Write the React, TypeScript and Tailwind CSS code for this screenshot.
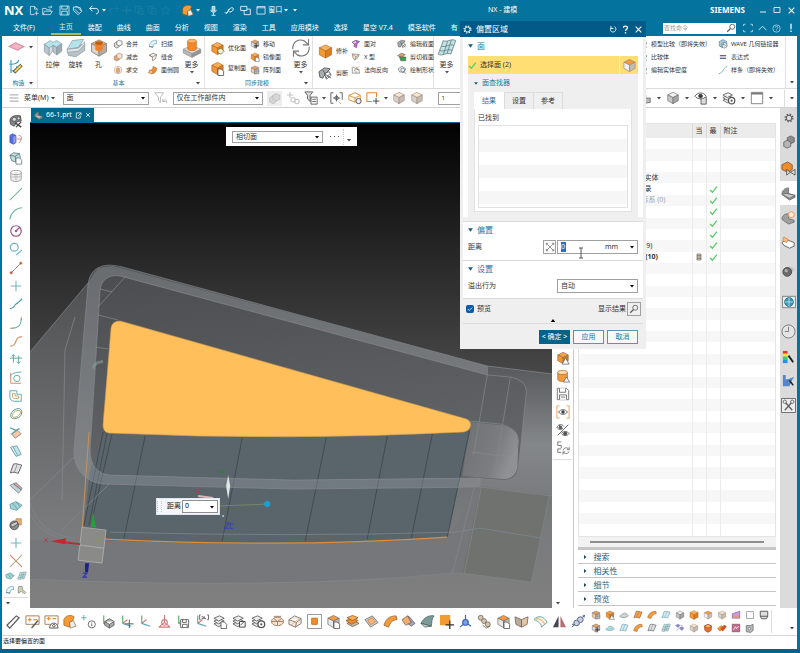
import { Fragment } from "react";
import type { ReactNode } from "react";
import clsx from "clsx";

const cube = (top: string, left: string, right: string, stroke = "#666") => (
    <g stroke={stroke} strokeWidth="0.7" strokeLinejoin="round">
        <path fill={top} d="M8 1.5 14 4.5 8 7.5 2 4.5Z" />
        <path fill={left} d="M2 4.5 8 7.5V14.5L2 11Z" />
        <path fill={right} d="M14 4.5 8 7.5V14.5L14 11Z" />
    </g>
);

const sheet = (fill: string, stroke = "#666") => (
    <g stroke={stroke} strokeLinejoin="round">
        <path fill={fill} d="M5 2.5C8 1 11 3 14.5 3.5L10.5 13C8 12 5 11 1.5 12.5Z" />
        <path fill="none" strokeWidth="0.6" d="M9.5 2.8 6 11.8" />
    </g>
);

const layers = (
    <g fill="#eee" stroke="#555" strokeWidth="0.9" strokeLinejoin="round">
        <path d="M1 10.5 6 13.5 12 10.5 7 8Z" />
        <path d="M1 7.5 6 10.5 12 7.5 7 5Z" />
        <path d="M1 4.5 6 7.5 12 4.5 7 2Z" />
    </g>
);

const csys = (
    <g fill="none" strokeWidth="1.2">
        <path stroke="#54ad66" d="M4 10V1.5" />
        <path stroke="#d66767" d="M4 10 9 6" />
        <path stroke="#58a7b6" d="M4 10 13 13" />
    </g>
);

const gear = (color: string) => (
    <g fill="none" stroke={color}>
        <circle cx="8" cy="8" r="4.5" strokeWidth="1.6" />
        <circle cx="8" cy="8" r="6.2" strokeWidth="2" strokeDasharray="2.4 2.5" />
    </g>
);

const badge = (fill: string) => (
    <path fill={fill} stroke="#555" strokeWidth="0.9" d="M8.5 8.5H12L14.5 11V15.5H8.5Z" />
);

const magnifier = (color: string) => (
    <g fill="none" stroke={color} strokeWidth="1.3">
        <circle cx="10" cy="6" r="4" />
        <path strokeWidth="2" d="M7 9 2 14" />
    </g>
);

const ICONS: Record<string, ReactNode> = {
    orangeCube: (
        <g stroke="#a86a2c" strokeWidth="0.7" strokeLinejoin="round">
            <path fill="#ffb45c" d="M8 1 14.5 4 8 7.500 1.500 4Z" />
            <path fill="#f29a36" d="M1.500 4 8 7.500V15L1.500 11.500Z" />
            <path fill="#dd7c1c" d="M14.500 4 8 7.500V15L14.500 11.500Z" />
        </g>
    ),
    greyCube: cube("#f1f1f1", "#c7c7c7", "#a5a5a5"),
    paleCube: cube("#f8e4d3", "#d8d2cc", "#c5bdb4", "#a08b78"),
    orangeTop: cube("#f79a3a", "#f0f0f0", "#c4bdb6", "#9a8470"),
    orangeTopPage: <>{cube("#f79a3a", "#e8e8e8", "#bdbdbd")}{badge("#fff")}</>,
    orangePage: <>{cube("#ffad52", "#f29736", "#de7a1a", "#a8682a")}{badge("#fff")}</>,
    orangeWarn: (
        <>
            {cube("#f6a24b", "#f2963a", "#c47b36", "#9a6632")}
            <path fill="#fff" stroke="#666" strokeWidth="0.9" d="M11 8 15 15H7Z" />
        </>
    ),
    optimize: (
        <>
            {cube("#ffad52", "#f29736", "#de7a1a", "#a8682a")}
            <path fill="#eef0d8" stroke="#75804a" strokeWidth="0.9" d="M8 9 12 8 15 11 12 14 9 13Z" />
        </>
    ),
    orangeCylinder: (
        <g stroke="#a0682e" strokeWidth="0.8">
            <path fill="#f3983b" d="M2 4V12C3 15 12 15 13 12V4Z" />
            <ellipse cx="7.5" cy="4" rx="5.5" ry="2.4" fill="#ffd9a5" />
            <path fill="#fff" stroke="#555" d="M12 9 15.5 15H8.5Z" />
        </g>
    ),
    greyCylinder: (
        <g stroke="#888" strokeWidth="0.8" fill="#ececec">
            <path d="M2 4V12C3 15 13 15 14 12V4Z" />
            <ellipse cx="8" cy="4" rx="6" ry="2.4" fill="#fafafa" />
            <path d="M8 4V13M3 9H13" stroke="#aaa" />
        </g>
    ),
    plane: <path fill="#f4b4c4" stroke="#d8899e" d="M1 8 7 4.5 15 8 9 11.5Z" />,
    sketch: (
        <g fill="none">
            <path stroke="#44a3c4" strokeWidth="1.2" d="M3 1V14M1 5C6 6 10 4 11 1M3 12C7 12 9 9 9 7" />
            <path stroke="#555" strokeWidth="3.4" d="M6 13.5 13.5 6" />
            <path stroke="#f0ce4f" strokeWidth="2" d="M6.7 12.8 13 6.5" />
        </g>
    ),
    extrude: (
        <g stroke="#7d959e" strokeWidth="0.5" strokeLinejoin="round">
            <path fill="#b4e3ec" d="M1 5 6 2 8 3.5 11 2 15 4.5 11 7.5 8 6 5 8Z" />
            <path fill="#bcc5c9" d="M1 5V11L5 14V8Z" />
            <path fill="#d9dfe2" d="M5 8 8 6V10L5 14Z" />
            <path fill="#bcc5c9" d="M8 6 11 7.5V13.5L8 11Z" />
            <path fill="#a0aaaf" d="M11 7.5 15 4.5V10.5L11 13.5Z" />
        </g>
    ),
    revolve: (
        <g stroke="#7d959e" strokeWidth="0.5" strokeLinejoin="round">
            <path fill="#b9c2c6" d="M1 10 5 6 15 5 15 10 8 15 2 14Z" />
            <path fill="#b4e3ec" d="M1 9 5 2 14 1 10 7.5Z" />
            <path fill="#e1e5e7" d="M1 9 10 8 15 3V5L10 10.5 1 11.5Z" />
        </g>
    ),
    hole: (
        <>
            {cube("#f9a55a", "#d9d3ce", "#b3aca6", "#8c8680")}
            <path fill="#f08226" d="M5 3.5V9C6 11 10 11 11 9V3.5Z" />
            <ellipse cx="8" cy="4" rx="3" ry="1.4" fill="#bd5d12" />
        </>
    ),
    boss: (
        <g stroke="#888" strokeWidth="0.5">
            <path fill="#e4e4e4" d="M1 9 8 6 15 9 8 12.5Z" />
            <path fill="#b9b9b9" d="M1 9 8 12.5V15.5L1 12Z" />
            <path fill="#969696" d="M15 9 8 12.5V15.5L15 12Z" />
            <path fill="#f28a2c" stroke="#c96711" d="M4.5 2.5V9C5.500 10.6 10.500 10.6 11.500 9V2.5Z" />
            <ellipse cx="8" cy="2.5" rx="3.5" ry="1.5" fill="#ffb56d" stroke="#c96711" />
        </g>
    ),
    unite: (
        <g fill="#ddd" stroke="#555">
            <path d="M2 7 6 5 10 7V12L6 14.5 2 12Z" />
            <path fill="#f5f5f5" d="M6 4 10 2 14.5 4V9L10 11 6 9Z" />
        </g>
    ),
    subtract: (
        <g stroke="#a87551">
            <path fill="#d9a982" d="M2 7 6 5 10 7V12L6 14.5 2 12Z" />
            <path fill="#fbe4cf" d="M6 4 10 2 14.5 4V9L10 11 6 9Z" />
        </g>
    ),
    intersect: (
        <g fill="none" stroke="#b39c8a">
            <circle cx="8" cy="8" r="6" />
            <path fill="#f1a35d" d="M5 6 8 4 11 6V11L8 13 5 11Z" />
        </g>
    ),
    sweep: (
        <g fill="none" stroke="#4e94aa">
            <path fill="#e8f4f7" d="M2 12C2 7 6 2 13 2L14 7C9 7 8 10 8 13Z" />
            <path stroke="#555" d="M2 12 8 13" />
        </g>
    ),
    sew: (
        <g fill="#f4eee9" stroke="#75665b">
            <path d="M2 5 8 2 14 4 12 11 7 14 7 8Z" />
            <path d="M7 8 14 4M2 5 7 8" />
        </g>
    ),
    blend: (
        <g stroke="#9b5f2a" strokeWidth="0.7">
            <path fill="#f08d32" d="M3 8C8 8 8 4 8 2L14 5C14 11 10 14 6 14L1 12Z" />
            <path fill="#ffc78f" d="M1 12 3 8 8 10 6 14Z" />
        </g>
    ),
    faceMove: (
        <>
            {cube("#f5a151", "#dedede", "#b0b0b0")}
            <path stroke="#333" strokeWidth="1.3" fill="none" d="M10 7V15M6 11H14" />
        </>
    ),
    faceGrid: (
        <>
            {cube("#f5a151", "#f2c9a2", "#c9c9c9")}
            <path stroke="#555" strokeWidth="0.9" fill="#fff" d="M8 8H14V14H8ZM11 8V14M8 11H14" />
        </>
    ),
    rotate: (
        <g fill="none" stroke="#777" strokeWidth="0.9">
            <path d="M1.500 9C1 3 6 0 11 2.500L13.500 5M14.500 7C15 13 10 16 5 13.500L2.500 11" />
            <path d="M14 1V5.500H9.500M2 15V10.500H6.500" />
        </g>
    ),
    section: (
        <g stroke="#444" strokeWidth="0.8">
            <path fill="#a8adb0" d="M1 6 7 2 13 3 9 7 5 13 2 12Z" />
            <path fill="#fff" d="M7 8 12 6 14 10 9 14Z" />
            <path fill="none" d="M8 9 14 13M13 8 8 13M5 4 8 9" />
        </g>
    ),
    faceMagenta: (
        <g stroke="#6e3b80" strokeWidth="0.8">
            <path fill="#b968c7" d="M2 5 8 2 14 4 10 7 9 14 5 12V8Z" />
            <path fill="#e6b9ec" d="M2 5 8 2 10 7 5 8Z" />
        </g>
    ),
    funnelShape: (
        <g fill="#f3e3d6" stroke="#85756a">
            <path d="M2 3 13 4 11 9 6 13 3 9Z" />
            <path fill="none" d="M2 3 8 8 13 4M8 8 6 13" />
        </g>
    ),
    normals: (
        <g fill="none" stroke="#6d6560">
            <path d="M2 3V13H14M5 10C5 6 10 5 13 7V13M3 3 12 8M8 13V9" />
            <path stroke="#d18a51" d="M7 2 10 5 13 2" />
        </g>
    ),
    greenCut: (
        <g stroke="#464646" strokeWidth="0.8">
            <path fill="#e0a05f" d="M1 6 7 2 13 4 8 9Z" />
            <path fill="#37a349" d="M4 8 14 8V14H6Z" />
        </g>
    ),
    drawShape: (
        <g fill="#e8eef2" stroke="#5c6c75">
            <path d="M2 6 8 2 14 6 11 12 4 11Z" />
            <circle cx="9" cy="8" r="3" />
            <path d="M11 10 14 14" />
        </g>
    ),
    meshBlue: (
        <g stroke="#5f7884" strokeWidth="0.6">
            <path fill="#bfe4e2" d="M5 2C8 4 11 0 15 2L11 13C8 11 4 15 1 13Z" />
            <path fill="none" d="M8.5 2.5 5 13.5M11.5 1.5 8 12.5M3.5 6.5C7 8 10 4 13.5 6M2.2 10C6 11.5 8 8 12.2 10" />
        </g>
    ),
    globeLink: (
        <g stroke="#395a6c" strokeWidth="0.8">
            <path fill="#a8cede" d="M2 4 8 1 14 4V11L8 14 2 11Z" />
            <circle cx="10" cy="10" r="4.5" fill="#e8eff2" />
            <path fill="none" d="M6 8C9 9 12 9 14 12M9 6 7 13" />
        </g>
    ),
    equals: <path stroke="#30336b" strokeWidth="1.8" d="M3 6H13M3 10H13" />,
    spline: <path fill="none" stroke="#4aa6a2" strokeWidth="1.2" d="M1 14C5 14 7 10 9 7S13 3 15 2" />,
    funnel: (
        <g fill="none" stroke="#b4b4b4">
            <path d="M1 2H11L7.5 7V13L5 11V7Z" />
            <path d="M10 12C13 8 15 11 14 14M10 12H13M10 12V9" />
        </g>
    ),
    filterList: (
        <g fill="#ddd" stroke="#555">
            <path d="M1 1H10L7 5V12L4 9V5Z" />
            <path fill="#fff" d="M8 7H15V15H8ZM9.5 9.5H13.5M9.5 12H13.5" />
        </g>
    ),
    bracketMove: (
        <g fill="none" stroke="#555">
            <path d="M4 2H1V14H4M11 2H14V10" />
            <path d="M7.5 4V12M3.5 8H11.5" />
            <circle cx="7.5" cy="8" r="2" />
            <path stroke="#dd8a3d" d="M10 12 13 15" />
        </g>
    ),
    rectSelect: (
        <g fill="none">
            <path stroke="#e08b3b" strokeWidth="1.2" d="M1 2H12V7M1 2V12H7" />
            <path stroke="#444" strokeWidth="1.1" d="M11.5 8V15M8 11.5H15" />
        </g>
    ),
    boxGlobe: (
        <g fill="none" stroke="#e08b3b" strokeWidth="1.1">
            <path d="M1 5 8 2 14 5 8 8ZM1 5V10L8 13V8M14 5V9" />
            <circle cx="12" cy="11.5" r="3" stroke="#555" fill="#eee" />
        </g>
    ),
    ghost: (
        <g fill="#d6d6d6" stroke="#bbb">
            <path d="M2 7 6 5 10 7V12L6 14.5 2 12Z" />
            <path d="M6 4 10 2 14.5 4V9L10 11 6 9Z" />
        </g>
    ),
    chain: (
        <g fill="none" stroke="#c4c4c4" strokeWidth="1.2">
            <path d="M1 4.500H8M4.500 1V8" />
            <circle cx="8" cy="10" r="2.5" />
            <circle cx="12.5" cy="12" r="2.5" />
        </g>
    ),
    eyePage: (
        <g fill="#fff" stroke="#555">
            <path fill="#ddd" d="M8 7H14V15H8Z" />
            <path d="M1 6C4 1 11 1 14 6C11 10 4 10 1 6Z" />
            <circle cx="7.5" cy="5.8" r="2.2" fill="#333" />
        </g>
    ),
    frame: (
        <g fill="#fff" stroke="#777">
            <path d="M1.5 1.5H14.5V14.5H1.5Z" />
            <path strokeWidth="2" d="M1.5 3H14.5" />
        </g>
    ),
    shaded: (
        <g stroke="#444" strokeWidth="0.7">
            <path fill="#6e6e6e" d="M2 6C4 3 8 2 9 5L8 13 2 11Z" />
            <path fill="#bdbdbd" d="M8 8 14 8V13L8 14Z" />
        </g>
    ),
    layers,
    layerPage: <>{layers}{badge("#fff")}</>,
    layerEdit: <>{layers}<path fill="#fff" stroke="#444" d="M8 8H14V14H8ZM9 12 13 8" /></>,
    layerGear: (
        <>
            {layers}
            <circle cx="11" cy="11" r="3.6" fill="#fff" stroke="#555" strokeWidth="1.4" />
            <circle cx="11" cy="11" r="1.2" fill="#555" />
        </>
    ),
    // curve tools
    people: (
        <g stroke="#444" strokeWidth="0.8">
            <path fill="#7d8387" d="M1 8C1 3 6 1 13 2L14 8 9 9 6 14 2 12Z" />
            <circle cx="6" cy="6" r="2.4" fill="#ddd" />
            <circle cx="11" cy="5" r="1.6" fill="#eee" />
            <path strokeWidth="1.6" d="M7 10 14 15M14 9 8 15" />
        </g>
    ),
    blueBlock: (
        <g>
            <path fill="#5a6de0" stroke="#3a46a8" strokeWidth="0.7" d="M1 4 4 2 8 4V12L5 14 1 12Z" />
            <path fill="#98a4f2" d="M5 5.500 7.500 4.500V11.500L5 13Z" />
            <path fill="none" stroke="#d87a7a" d="M9 8H14M11 4C14 4 15 6 14 8S14 12 11 12" />
        </g>
    ),
    teapot: (
        <g stroke="#56666d" strokeWidth="0.8" fill="#bfe0e3">
            <path d="M1 5 5 2 12 3 13 8 9 13 3 11Z" />
            <path fill="none" d="M1 5 7 6 12 3M7 6 8 13" />
            <path fill="#fff" d="M8 8H12L14.5 10.5V15H8Z" />
        </g>
    ),
    line: <path stroke="#74b892" strokeWidth="1.2" d="M1 15 15 1" />,
    arc: <path fill="none" stroke="#6ab5a4" strokeWidth="1.3" d="M1 15C2 8 8 2 15 2" />,
    circle: (
        <g fill="none" stroke="#9a5a8a" strokeWidth="1.4">
            <circle cx="8" cy="8" r="6" />
            <path d="M8 8 12 4" />
            <circle cx="8" cy="8" r="0.8" />
        </g>
    ),
    tangent: (
        <g fill="none" stroke="#6ab2bb" strokeWidth="1.3">
            <circle cx="6" cy="6" r="4.500" />
            <path d="M8 15 15 9" />
        </g>
    ),
    segment: (
        <g stroke="#c0653c" fill="#c0562a">
            <path stroke="#5aa9b4" d="M2 14 14 2" />
            <path strokeDasharray="5 3" d="M2 14 14 2" />
            <circle cx="2.5" cy="13.5" r="1.2" />
            <circle cx="13.5" cy="2.5" r="1.2" />
        </g>
    ),
    plus: <path stroke="#74b4bd" strokeWidth="1.2" d="M8 2V14M2 8H14" />,
    curveS: <path fill="none" stroke="#4b9dab" strokeWidth="1.3" d="M1 13C6 14 6 9 8 8S12 5 15 2" />,
    fillet: (
        <g fill="none" strokeWidth="1.2">
            <path stroke="#dc9b69" d="M1 14H5M14 1V5" />
            <path stroke="#5aac99" d="M3 14C10 14 14 11 14 3" />
        </g>
    ),
    bridge: <path fill="none" stroke="#d49a72" strokeWidth="1.3" d="M1 14C6 14 7 11 8 8S11 3 15 3" />,
    arrows: (
        <g fill="none" stroke="#5da79c" strokeWidth="1.1">
            <path d="M1 7H15M5 3V12M11 4V13M3 5 5 3 7 5M9 11 11 13 13 11" />
        </g>
    ),
    offsetCurve: (
        <g fill="none" strokeWidth="1.1">
            <path stroke="#d9846a" d="M2 2V14H14" />
            <path stroke="#5cabae" d="M1 6C5 1 9 2 14 1" />
            <circle cx="9" cy="8.5" r="3.6" stroke="#5cabae" />
        </g>
    ),
    profile: (
        <g fill="none" strokeWidth="1.1">
            <path stroke="#5cabae" d="M1 2H9V6H14V14H6C3 14 1 12 1 9Z" />
            <path stroke="#c9a36f" d="M4 5H7V8H11V11H7C5 11 4 10 4 8Z" />
        </g>
    ),
    ring: (
        <g fill="none" strokeWidth="1.1">
            <path stroke="#4c8f93" d="M2 10C2 5 8 1 12 2S15 10 11 12 2 14 2 10Z" />
            <path stroke="#b3a55d" d="M4 10C4 6 8 3.500 11.500 4S12.500 9 10 10.500 4 12.500 4 10Z" />
        </g>
    ),
    sheetLift: (
        <g stroke="#85766b" strokeWidth="0.8">
            <path fill="#f4c7a8" d="M3 9 10 5 14 9 7 14Z" />
            <path fill="none" stroke="#4c9fae" strokeWidth="1.3" d="M1 2 8 5 12 3M8 5 3 9" />
        </g>
    ),
    sheetBlue: sheet("#cfeaf0", "#6a9fae"),
    sheetTilt: (
        <g stroke="#6a9fae" strokeLinejoin="round">
            <path fill="#bfe4ec" d="M2 4 9 2 14 12 8 14Z" />
            <path fill="#e2f3f7" d="M2 4 4 2.500 10 13 8 14Z" />
        </g>
    ),
    sheetGrey: sheet("#dfe3e5", "#555"),
    sheetOrange: sheet("#f7a04a", "#8f6035"),
    sheetPink: (
        <g stroke="#666" strokeWidth="0.7">
            <path fill="#bcd3d6" d="M1 5 5 3 14 10 11 14Z" />
            <path fill="#d9a0b0" d="M5 3 8 2 15 8 14 10Z" />
        </g>
    ),
    sheetTeal: (
        <g stroke="#4a858a" strokeWidth="0.7">
            <path fill="#a3d3d8" d="M1 6 8 3 15 7 9 13 2 11Z" />
            <path fill="none" d="M4 4.5 10 12M8 3 13 9" />
        </g>
    ),
    knob: (
        <g stroke="#444" strokeWidth="0.8">
            <path fill="#e5b07f" stroke="#b9783f" d="M8 2H14V9H8Z" />
            <circle cx="6" cy="9.5" r="5" fill="#8a8f92" />
            <path fill="#ccc" d="M2 8 9 5 10 8 3 12Z" />
        </g>
    ),
    cross: (
        <g strokeWidth="1.2">
            <path stroke="#cf8667" d="M1 1 15 15" />
            <path stroke="#b0aa88" d="M15 1 1 15" />
        </g>
    ),
    wrench: (
        <g fill="#d9d2a6" stroke="#5f7679">
            <path d="M2 3 8 2 9 7 14 12 12 14 7 10 2 13Z" />
        </g>
    ),
    // file, measure and datum tools
    ruler: <path fill="#fff" stroke="#555" strokeWidth="1.2" d="M1 12 11 2 14 4 4 15Z" />,
    boardEdit: (
        <g fill="#fff" stroke="#a17c5c">
            <path d="M1 2H15V11H1Z" />
            <path stroke="#ef8d2e" strokeWidth="1.3" fill="none" d="M3 6H7M5 4V8M9 6H13" />
            <path stroke="#555" strokeWidth="1.5" d="M7 15 14 7" />
        </g>
    ),
    boardGear: (
        <g fill="#fff" stroke="#a17c5c">
            <path d="M1 2H15V11H1Z" />
            <path stroke="#ef8d2e" strokeWidth="1.3" fill="none" d="M3 5H7M5 3V7M9 5H13" />
            <path stroke="#555" d="M6 15C6 8 15 8 15 15Z" />
            <circle cx="10.5" cy="12.5" r="1.4" stroke="#555" />
        </g>
    ),
    orangeHead: (
        <g stroke="#8b6030" strokeWidth="0.7">
            <path fill="#f59b34" d="M2 6C3 2 9 0 13 3L11 8 8 9V14L2 12Z" />
            <path fill="#ececec" d="M8 9 12 7 15 13 9 15Z" />
        </g>
    ),
    info: (
        <g fill="none" stroke="#666">
            <path stroke="#5ab0b6" d="M3 1V7M0 4H6" />
            <circle cx="11.5" cy="11" r="3.8" />
            <path d="M11.5 10V13M11.5 8.5V9.2" />
        </g>
    ),
    csys,
    csysCube: (
        <>
            {csys}
            <path fill="#aaa" stroke="#555" strokeWidth="0.8" d="M5 8 10 5 15 8V12L10 15 5 12ZM5 8 10 11 15 8M10 11V15" />
        </>
    ),
    csysMove: <>{csys}<path stroke="#555" d="M11 6V15M6.5 10.5H15.5" /></>,
    csysRed: (
        <g fill="none" stroke="#d67878" strokeWidth="1.1">
            <path d="M8 1V9L2 14M8 9 14 14M2 14H14" />
            <circle cx="8" cy="9" r="3" />
        </g>
    ),
    csysSave: <>{csys}<path fill="#fff" stroke="#666" d="M6 6H14.5V14.5H6ZM8 6V9H12V6M8 14V11H13V14" /></>,
    csysPost: (
        <>
            {csys}
            <path fill="none" stroke="#666" d="M7 1H6V6H7M8 3H10V5H8M11 2.5V5H13M14 1H15.5V6H14" />
        </>
    ),
    drum: (
        <g fill="#f6e1cc" stroke="#9b7f66">
            <ellipse cx="8" cy="8" rx="6.5" ry="4.5" />
            <path d="M4 5 8 8 12 5M8 8V12M2 8H14M4 2.5H12" />
        </g>
    ),
    boxCut: (
        <g fill="#f1ece8" stroke="#83786e">
            <path d="M1 6 7 2 14 5 9 9ZM1 6V11L8 14 14 10V5M9 9 8 14" />
            <path stroke="#f1ab65" d="M3 12 13 4" />
        </g>
    ),
    orangeSquare: (
        <g>
            <path fill="#fff" stroke="#777" strokeWidth="0.8" d="M0.5 0.5H15.5V15.5H0.5Z" />
            <path fill="#f0902c" stroke="#c76f18" d="M5 4.5H11V11H5Z" />
        </g>
    ),
    orangeStack: (
        <g stroke="#8b5a26" strokeWidth="0.8">
            <path fill="#bbb" d="M2 10 8 13.5 15 10 9 7Z" />
            <path fill="#ef8c2c" d="M1 7 7 11 14 7 8 4Z" />
            <path fill="#ffab54" d="M2 4 8 7 14 4 8 1.5Z" />
        </g>
    ),
    tray: (
        <g stroke="#666" strokeWidth="0.8">
            <path fill="#c8cfd8" d="M1 6 9 2 15 9 7 14Z" />
            <path fill="#f8b67a" stroke="#d5803c" d="M4 6.5 9 4 12 8.5 7 11.5Z" />
        </g>
    ),
    orangeArc: <path fill="#f59a36" stroke="#8f6035" strokeWidth="0.8" d="M1 12C3 6 6 2 14 2L15 6C10 6 8 9 6 14Z" />,
    orangeBlue: (
        <g stroke="#77635a" strokeWidth="0.8">
            <path fill="#f5ab69" d="M1 6 7 2 11 9 5 12Z" />
            <path fill="#9aa6c9" d="M7 2 9 3 15 10 11 13 8 11 11 9Z" />
        </g>
    ),
    fin: (
        <g stroke="#4e5f60" strokeWidth="0.8">
            <path fill="#7c9b98" d="M1 10C4 4 9 1 15 2C12 5 13 9 12 13Z" />
            <path fill="#c7d4d3" d="M1 10 12 13 5 14Z" />
        </g>
    ),
    squareMove: (
        <g>
            <path fill="#f39a31" d="M1 1H12V12H1Z" />
            <path stroke="#333" strokeWidth="1.4" d="M11.5 7V16M7 11.5H16" />
        </g>
    ),
    csysBlue: (
        <g stroke="#4067bd" strokeWidth="1.3" fill="#7ba1e5">
            <path d="M8 9V1M8 9 2 14M8 9 14 13" />
            <circle cx="8" cy="9" r="3" />
        </g>
    ),
    chainBrown: (
        <g fill="#d6c5ae" stroke="#74685a" strokeWidth="0.9">
            <circle cx="4" cy="4" r="2.6" />
            <circle cx="7.5" cy="7.5" r="2.6" />
            <circle cx="11.5" cy="11" r="2.6" />
            <path d="M6 12 10 15M14 13 10 15" />
        </g>
    ),
    book: (
        <g stroke="#6b5b4e" strokeWidth="0.8">
            <path fill="#b9ada0" d="M1 3 8 6V14L2 11Z" />
            <path fill="#e2c5a5" d="M15 3 8 6V14L14 11Z" />
        </g>
    ),
    fan: (
        <g fill="#fff2e2" stroke="#5aa7a0">
            <path d="M1 6C5 1 12 2 15 9L9 14C9 10 6 8 1 6Z" />
            <path stroke="#e09b5b" d="M3 5C8 5 12 8 12 11" />
        </g>
    ),
    mirror: (
        <g>
            <path fill="#454558" d="M7 2V14H1Z" />
            <path fill="#b56f73" d="M9 2V14H15Z" />
        </g>
    ),
    linkBlue: (
        <g fill="#c9d1e6" stroke="#56607c">
            <circle cx="6" cy="9.500" r="3" />
            <circle cx="10" cy="6" r="3" />
            <path d="M1 14 3 12M13 3 15 1M1 11H3V13M13 1V3H15" />
        </g>
    ),
    hat: <path fill="#cfd6d6" stroke="#6a7878" strokeWidth="0.9" d="M1 10C4 9 5 5 9 5S12 8 15 9C12 13 4 13 1 10Z" />,
    tealHat: <path fill="#a8d7dd" stroke="#6aa0a8" strokeWidth="0.9" d="M1 10C4 9 5 5 9 5S12 8 15 9C12 13 4 13 1 10Z" />,
    purple: (
        <g stroke="#7d55a5">
            <path fill="#c99be0" d="M2 6 8 4 14 2V13H2Z" />
            <path fill="#ef9a55" stroke="none" d="M4 9H12V12H4Z" />
        </g>
    ),
    magenta: (
        <g>
            <path fill="#c46a8d" stroke="#7a4358" d="M2 2H14V14H2Z" />
            <path stroke="#fff" strokeWidth="1.2" fill="none" d="M4 11 7 6 9 9 12 5" />
        </g>
    ),
    square: <path fill="#fff" stroke="#777" d="M2.5 2.5H13.5V13.5H2.5Z" />,
    monitor: <path fill="#ddd" stroke="#444" strokeWidth="1.3" d="M2 2H14V10L12 14H4L2 10ZM2 10H14" />,
    tag: (
        <g fill="#b8bcbe" stroke="#555">
            <path d="M2 4 9 4 13 2V12L9 15 2 14Z" />
            <circle cx="7" cy="9" r="2" fill="#fff" />
        </g>
    ),
    dots: (
        <g fill="#8a90cf" stroke="#6268a5" strokeWidth="0.8">
            <path d="M1 4 5 2 8 4 5 7ZM7 8 11 6 14 8 11 12Z" />
            <path stroke="#a068b5" d="M2 12 6 9M9 3 13 5" />
        </g>
    ),
    redBall: (
        <g stroke="#8c3c17" strokeWidth="0.8">
            <path fill="#e7702a" d="M2 5 8 2 14 5 13 12 8 15 3 12Z" />
            <path fill="#ffb56d" d="M2 5 8 2 14 5 8 8Z" />
        </g>
    ),
    flame: (
        <g stroke="#8a3c16" strokeWidth="0.7">
            <path fill="#f39a31" d="M1 9 7 4 10 7 5 13Z" />
            <path fill="#d94f1e" d="M6 9 12 3 15 6 9 13Z" />
        </g>
    ),
    save: (
        <g fill="#fff" stroke="#777" strokeWidth="1.1">
            <path d="M1.5 1.5H12L14.5 4V14.5H1.5Z" />
            <path d="M4 1.5V6H11V1.5M4 14.5V9H12V14.5M5.5 11.5H10.5" />
        </g>
    ),
    eyeFrame: (
        <g fill="none">
            <path stroke="#e39a57" d="M4 1H1V15H4M12 1H15V15H12" />
            <path stroke="#555" d="M3 8C5 4.5 11 4.5 13 8C11 11.5 5 11.5 3 8Z" />
            <circle cx="8" cy="8" r="2" fill="#444" />
        </g>
    ),
    eyeToggle: (
        <g fill="none" stroke="#555">
            <path d="M1 5C3 1 7 1 9 4M1 5C3 8 5 8 7 7M2 14 14 2M3 2 8 7" />
            <circle cx="5" cy="5" r="1.6" fill="#555" />
            <path d="M6 12C8 9 13 9 15 12C13 15 8 15 6 12Z" />
            <circle cx="10.5" cy="12" r="1.8" fill="#444" />
        </g>
    ),
    swap: (
        <g fill="none" stroke="#777" strokeWidth="1.1">
            <path d="M6 1H2V5H6V8M6 9H2V13H6" />
            <path d="M8 11C9 7 13 7 14.5 9.5M15 7V10H12.5M15 12C14 15 10 15 8.5 13M8 15.5V12.5H10.5" />
        </g>
    ),
    // resource bar
    gearDark: gear("#555"),
    gearLight: gear("#fff"),
    nest: (
        <g stroke="#555" strokeWidth="0.8">
            <path fill="#8d8d8d" d="M6 3 10 1 14 3V8L10 10 6 8Z" />
            <path fill="#b5b5b5" d="M2 8 6 6 10 8V13L6 15 2 13Z" />
        </g>
    ),
    nestOrange: (
        <g stroke="#6f4a2c" strokeWidth="0.8">
            <path fill="#ef8c2c" d="M1 4 7 1 12 4V9L7 12 1 9Z" />
            <path fill="#ddd" stroke="#444" d="M6 9 10 12 6 15ZM15 9 10 12 15 15Z" />
        </g>
    ),
    part: (
        <g stroke="#666" strokeWidth="0.8">
            <path fill="#8e8e8e" d="M1 9C1 5 4 2 8 2V8L15 10V12L9 15Z" />
            <path fill="#cacaca" d="M1 9C5 7 10 9 15 10L9 13Z" />
        </g>
    ),
    partClock: (
        <g stroke="#666" strokeWidth="0.8">
            <path fill="#a0a0a0" d="M1 10C1 6 4 4 8 4V9L14 11V13L8 15Z" />
            <circle cx="11" cy="5" r="3.2" fill="#fbe9da" stroke="#e1873a" />
        </g>
    ),
    hands: (
        <g fill="#fff" stroke="#555" strokeWidth="0.9">
            <path d="M1 8 6 5 14 8V12L9 14 3 11Z" />
            <path fill="#f5b98a" stroke="#e1873a" d="M3 2 8 5 6 8 2 6Z" />
        </g>
    ),
    sphere: (
        <g>
            <path fill="#c4c4c4" d="M8 2 15 6 11 10Z" />
            <circle cx="6" cy="9" r="5" fill="#6c6c6c" stroke="#444" />
            <circle cx="4.8" cy="7.6" r="1.8" fill="#b0b0b0" />
        </g>
    ),
    web: (
        <g stroke="#777">
            <path fill="#e4edf0" d="M0.5 1.5H15.5V14.5H0.5Z" />
            <circle cx="8" cy="8" r="5" fill="#3a98b5" stroke="#216e87" />
            <path fill="none" stroke="#bde3ee" d="M3 8H13M8 3V13" />
        </g>
    ),
    clock: (
        <g fill="#e4e4e4" stroke="#777">
            <circle cx="8" cy="8" r="7" />
            <path d="M8 3V8H4" />
        </g>
    ),
    palette: (
        <g>
            <path fill="#e23b2e" d="M2 1H7V4H2Z" />
            <path fill="#f5e12d" d="M2 4H7V7H2Z" />
            <path fill="#36cf5a" d="M2 7H7V10H2Z" />
            <path fill="#2a8df0" d="M2 10H7V14H2Z" />
            <path stroke="#222" strokeWidth="2" d="M8 6 13 13" />
        </g>
    ),
    brush: (
        <g>
            <path fill="#5585cc" d="M2 2H5V7L9 6 14 4 11 9 9 14H2Z" />
            <path stroke="#222" strokeWidth="1.6" d="M9 8 13 13" />
        </g>
    ),
    tools: (
        <g fill="#eee" stroke="#666">
            <path d="M0.5 0.5H15.5V15.5H0.5Z" />
            <path strokeWidth="1.6" d="M4 4 12 13M12 4 4 13" />
            <circle cx="4" cy="4" r="1.8" />
            <circle cx="12" cy="4" r="1.8" />
        </g>
    ),
    // title bar
    newFile: <path fill="none" stroke="#cfe6ef" strokeWidth="1.2" d="M8 14H2V2H8L12 6V8M8 2V6H12M11 9V15M8 12H14" />,
    open: <path fill="none" stroke="#cfe6ef" strokeWidth="1.2" d="M1 14V5H6L7 7H12V9M1 14 4 9H15L12 14ZM9 3H14V1M14 3 12 5" />,
    saveLight: <path fill="none" stroke="#cfe6ef" strokeWidth="1.3" d="M1.5 1.5H14.5V14.5H1.5ZM4 1.5V6H12V1.5M4 14.5V9H12V14.5" />,
    pens: <path fill="none" stroke="#cfe6ef" strokeWidth="1.3" d="M2 3H8L14 9 9 14 2 8ZM5 2 12 4 14 9M4 6 10 12" />,
    undo: <path fill="none" stroke="#e6f3f8" strokeWidth="1.4" d="M5 1 1 5 5 9M1 5H10C15 5 15 13 10 13" />,
    redo: <path fill="none" stroke="#187da4" strokeWidth="1.4" d="M11 1 15 5 11 9M15 5H6C1 5 1 13 6 13" />,
    cut: <path fill="#187da4" d="M7 1H9V7H15V9H9V15H7V9H1V7H7Z" />,
    copy: <path fill="none" stroke="#187da4" strokeWidth="1.4" d="M2 2H9V11H2ZM6 5H13V14H6Z" />,
    star: <path fill="none" stroke="#187da4" strokeWidth="1.4" d="M8 2 10 6H14L11 9 12 14 8 11 4 14 5 9 2 6H6Z" />,
    mic: (
        <g fill="none" stroke="#e6f3f8" strokeWidth="1.3">
            <path fill="#9fc9da" d="M6 2H10V9H6Z" />
            <path d="M4 7C4 12 12 12 12 7M8 11V15M5 15H11" />
        </g>
    ),
    touch: <path fill="none" stroke="#e6f3f8" strokeWidth="1.4" d="M1 11C5 13 7 5 11 4S14 9 10 10 5 7 8 5M3 13 6 10" />,
    windows: <path fill="none" stroke="#e6f3f8" strokeWidth="1.3" d="M1 2H10V8H1ZM6 8V14H15V6H10" />,
    window: <path fill="none" stroke="#e6f3f8" strokeWidth="1.3" d="M1.5 2.5H14.5V14.5H1.5ZM1.5 4.5H14.5" />,
    expand: <path fill="none" stroke="#cfe6ef" strokeWidth="1.3" d="M1 5V2H4M12 2H15V5M15 11V14H12M4 14H1V11" />,
    chevronUp: <path fill="none" stroke="#e6f3f8" strokeWidth="1.5" d="M1 11 8 4 15 11" />,
    help: (
        <g fill="none" stroke="#cfe6ef" strokeWidth="1.2">
            <circle cx="8" cy="8" r="6.5" />
            <path d="M5.5 6.5C5.5 3.5 10.5 3.5 10.5 6.5 10.5 8 8 8 8 10M8 11.5V12.5" />
        </g>
    ),
    bang: <path fill="#fff" d="M7 1H9V10H7ZM7 12H9V14.5H7Z" />,
    minimize: <path stroke="#fff" strokeWidth="1.8" d="M2 12H14" />,
    maximize: <path fill="none" stroke="#fff" strokeWidth="1.6" d="M2 3H14V13H2Z" />,
    close: <path fill="none" stroke="#fff" strokeWidth="2" d="M3 3 13 13M13 3 3 13" />,
    reset: <path fill="none" stroke="#fff" strokeWidth="1.8" d="M11 3C17 8 12 15 7 14 3 13 2 9 4 6M4 2V7H9" />,
    question: <path fill="none" stroke="#fff" strokeWidth="2.4" d="M4.5 5C4.5 1 11.5 1 11.5 5 11.5 8 8 7.5 8 10.5M8 12.5V15" />,
    magnifier: magnifier("#555"),
    menu: <path stroke="#777" strokeWidth="1.1" d="M1 3H15M1 8H15M1 13H15" />,
    check: <path fill="none" stroke="#5cc96f" strokeWidth="2.4" d="M2 9 6 13 14 3" />,
    flip: (
        <g fill="none" stroke="#666" strokeWidth="1.1">
            <path d="M2 2 14 14M14 2 2 14M2 5V2H5M14 5V2H11M2 11V14H5M14 11V14H11" />
        </g>
    ),
    lock: <path fill="none" stroke="#fff" strokeWidth="1.6" d="M9 2H3V14H12V8M7 9 13 3M9 2H14V7" />,
    chip: <path fill="#e5d7c8" stroke="#6b5a49" strokeWidth="1.3" d="M4 2H12V14H4ZM4 5H12M4 8H12M4 11H12" />,
};

function Icon({ name, className = "size-3" }: { name: string; className?: string }) {
    return (
        <svg viewBox="0 0 16 16" className={clsx("shrink-0", className)} aria-hidden="true">
            {ICONS[name]}
        </svg>
    );
}

function Caret({ className = "text-[#444]" }: { className?: string }) {
    return (
        <svg viewBox="0 0 4 4" className={clsx("size-1 shrink-0", className)} aria-hidden="true">
            <path fill="currentColor" d="M0 1H4L2 3.5Z" />
        </svg>
    );
}

const TABS = ["文件(F)", "主页", "装配", "曲线", "曲面", "分析", "视图", "渲染", "工具", "应用模块", "选择", "星空 V7.4", "模圣软件", "有"];

function IconButton({ name, size = "size-3", className }: { name: string; size?: string; className?: string }) {
    return (
        <button type="button" aria-label={name} className={clsx("flex shrink-0 items-center justify-center", className)}>
            <Icon name={name} className={size} />
        </button>
    );
}

function TitleBar() {
    return (
        <header className="bg-[#04739d] text-white">
            <div className="relative flex h-5 items-center pr-1 pl-1">
                <span className="text-[13px] leading-5 font-bold">NX</span>
                <div className="ml-[6px] flex items-center gap-[2px]">
                    <IconButton name="newFile" size="size-[11px]" />
                    <IconButton name="open" size="size-[11px]" />
                    <IconButton name="saveLight" size="size-[11px]" className="ml-1" />
                    <IconButton name="pens" size="size-[11px]" />
                    <IconButton name="undo" size="size-[11px]" className="ml-1" />
                    <Caret className="text-white" />
                    {["redo", "cut", "copy", "copy", "star"].map((name, i) => (
                        <IconButton key={i} name={name} size="size-[11px]" />
                    ))}
                    <IconButton name="orangeHead" size="size-[13px]" className="ml-2" />
                    <Caret className="text-white" />
                </div>
                <div className="ml-2 flex items-center gap-[5px]">
                    <IconButton name="mic" size="size-[11px]" />
                    <IconButton name="touch" size="size-[11px]" />
                    <IconButton name="windows" size="size-[11px]" />
                    <button type="button" className="flex items-center gap-0.5 text-[7px]">
                        <Icon name="window" className="size-[10px]" />
                        窗口
                        <Caret className="text-white" />
                    </button>
                    <Caret className="text-white" />
                </div>
                <h1 className="absolute left-[61%] text-[7px]">NX - 建模</h1>
                <div className="ml-auto flex items-center gap-[6px]">
                    <span className="mr-2 text-[8px] font-bold">SIEMENS</span>
                    <IconButton name="minimize" size="size-2" />
                    <IconButton name="maximize" size="size-2" />
                    <IconButton name="close" size="size-[9px]" />
                </div>
            </div>
            <div className="flex h-4 items-center pr-1 pl-[13px]">
                <nav className="flex h-4 items-center gap-[15px] text-[7px]">
                    {TABS.map((tab) => (
                        <a
                            key={tab}
                            href="#"
                            className={clsx(
                                "flex h-[14px] items-center whitespace-nowrap",
                                tab === "主页" && "-mx-2 border-b-2 border-[#a9b85c] px-2 text-[#efe69a]",
                                tab === "文件(F)" && "mr-[9px]",
                            )}
                        >
                            {tab}
                        </a>
                    ))}
                </nav>
                <div className="ml-auto flex items-center gap-[5px]">
                    <label className="mr-0.5 flex h-[11px] w-[73px] items-center bg-white">
                        <input aria-label="查找命令" placeholder="查找命令" className="min-w-0 flex-1 px-px text-[6px] placeholder:text-[#999]" />
                        <Icon name="magnifier" className="size-[10px]" />
                    </label>
                    <IconButton name="expand" size="size-[10px]" />
                    <IconButton name="chevronUp" size="size-[9px]" />
                    <IconButton name="help" size="size-[9px]" />
                    <IconButton name="bang" size="size-[10px]" />
                </div>
            </div>
        </header>
    );
}

function BigTool({ icon, label, more }: { icon: string; label: string; more?: boolean }) {
    return (
        <button type="button" className="flex w-[23px] flex-col items-center">
            <Icon name={icon} className="size-[20px]" />
            <span className="mt-[3px] text-[7px] leading-2">{label}</span>
            {more && <Caret className="mt-px text-[#555]" />}
        </button>
    );
}

function SmallTools({ items, iconSize = "size-[10px]", gap = "gap-[3px]" }: { items: string[][]; iconSize?: string; gap?: string }) {
    return (
        <div className={clsx("flex flex-col", gap)}>
            {items.map(([icon, label]) => (
                <button key={label} type="button" className="flex h-[10px] items-center gap-[3px] text-[6px] whitespace-nowrap">
                    <Icon name={icon} className={iconSize} />
                    {label}
                </button>
            ))}
        </div>
    );
}

function Group({ label, className, children }: { label?: string; className: string; children: ReactNode }) {
    return (
        <section className={clsx("flex shrink-0 flex-col border-r border-[#e2e2e2]", className)}>
            <div className="flex flex-1 items-start pt-[2px]">{children}</div>
            {label && (
                <div className="flex h-[10px] items-center pr-1 text-[6px] leading-[10px] text-[#1c6f8d]">
                    <span className="flex-1 text-center">{label}</span>
                    <Caret />
                </div>
            )}
        </section>
    );
}

function Ribbon() {
    return (
        <div className="flex h-[53px] overflow-hidden border-b border-[#dadada] bg-white text-[#333]">
            <Group label="构造" className="w-[36px] pl-[6px]">
                <div className="flex flex-col gap-1">
                    <button type="button" aria-label="基准平面" className="flex items-center gap-1">
                        <Icon name="plane" className="size-[17px]" />
                        <Caret />
                    </button>
                    <IconButton name="sketch" size="size-4" className="self-start" />
                </div>
            </Group>
            <Group label="基本" className="w-[167px] pl-[3px]">
                <BigTool icon="extrude" label="拉伸" />
                <BigTool icon="revolve" label="旋转" />
                <BigTool icon="hole" label="孔" />
                <div className="flex gap-[10px] pt-px pl-[3px]">
                    <SmallTools items={[["unite", "合并"], ["subtract", "减去"], ["intersect", "求交"]]} />
                    <SmallTools items={[["sweep", "扫掠"], ["sew", "缝合"], ["blend", "面倒圆"]]} />
                </div>
                <div className="ml-auto pr-px">
                    <BigTool icon="boss" label="更多" more />
                </div>
            </Group>
            <Group label="同步建模" className="w-[108px] pl-[5px]">
                <div className="pt-[5px]">
                    <SmallTools items={[["optimize", "优化面"], ["orangePage", "复制面"]]} iconSize="size-[15px]" gap="gap-[10px]" />
                </div>
                <div className="pt-px pl-[4px]">
                    <SmallTools items={[["faceMove", "移动"], ["orangePage", "镜像面"], ["faceGrid", "阵列面"]]} />
                </div>
                <div className="ml-auto">
                    <BigTool icon="rotate" label="更多" more />
                </div>
            </Group>
            <Group className="w-[121px] pl-[5px]">
                <div className="pt-[8px]">
                    <SmallTools items={[["orangeCube", "修补"], ["section", "剪断"]]} iconSize="size-[15px]" gap="gap-[12px]" />
                </div>
                <div className="flex gap-[9px] pt-px pl-[3px]">
                    <SmallTools items={[["faceMagenta", "面对"], ["funnelShape", "X 型"], ["normals", "法向反向"]]} />
                    <SmallTools items={[["section", "编辑截面"], ["greenCut", "剪切截面"], ["drawShape", "绘制形状"]]} />
                </div>
            </Group>
            <Group className="w-[26px] border-r-0 pl-px">
                <BigTool icon="meshBlue" label="更多" more />
            </Group>
            <div className="ml-auto flex items-start gap-[7px] border-r border-[#e2e2e2] pt-[3px] pr-[6px]">
                <SmallTools items={[["drawShape", "模型比较（即将失效）"], ["drawShape", "比较体"], ["drawShape", "编辑实体密度"]]} />
                <SmallTools items={[["globeLink", "WAVE 几何链接器"], ["equals", "表达式"], ["spline", "样条（即将失效）"]]} />
            </div>
            <div className="flex w-[11px] items-end justify-center pb-1">
                <Caret />
            </div>
        </div>
    );
}

function Select({ label, value, className }: { label: string; value: string; className?: string }) {
    return (
        <div className={clsx("relative flex items-center border border-[#a0a0a0] bg-white", className)}>
            <select aria-label={label} className="h-full w-full appearance-none bg-transparent px-[3px] text-[7px] leading-[10px]">
                <option>{value}</option>
            </select>
            <Caret className="pointer-events-none absolute right-[3px] text-black" />
        </div>
    );
}

function SelectionBar() {
    return (
        <div className="flex h-[19px] items-center overflow-hidden border-b border-[#d0d0d0] bg-white pl-[7px] text-[7px] text-[#333]">
            <button type="button" className="flex shrink-0 items-center gap-[5px]">
                <Icon name="menu" className="size-[10px]" />
                <span className="flex items-center gap-[2px]">
                    菜单(M)
                    <Caret />
                </span>
            </button>
            <Select label="类型过滤器" value="面" className="ml-[8px] h-[13px] w-[86px] shrink-0" />
            <IconButton name="funnel" size="size-[14px]" className="mx-[5px]" />
            <Select label="选择范围" value="仅在工作部件内" className="h-[13px] w-[90px] shrink-0" />
            <div className="ml-[4px] flex shrink-0 items-center gap-[4px]">
                <IconButton name="ghost" size="size-[13px]" className="bg-[#ededed] p-px" />
                <IconButton name="chain" size="size-[14px]" />
                <IconButton name="filterList" size="size-[14px]" />
                <Caret />
                <IconButton name="bracketMove" size="size-[14px]" />
                <IconButton name="boxGlobe" size="size-[14px]" />
                <IconButton name="rectSelect" size="size-[14px]" />
                <Caret />
                <IconButton name="paleCube" size="size-[14px]" />
                <IconButton name="paleCube" size="size-[14px]" />
            </div>
            <input aria-label="图层" defaultValue="1" className="ml-[14px] h-[13px] w-[60px] shrink-0 border border-[#a0a0a0] px-[3px] text-[6px]" />
            <div className="ml-auto flex shrink-0 items-center gap-[5px] pr-[3px]">
                {["shaded", "greyCube", "eyePage", "layerGear", "frame"].map((name) => (
                    <Fragment key={name}>
                        <IconButton name={name} size="size-[14px]" />
                        <Caret />
                    </Fragment>
                ))}
                <span className="ml-[6px] h-[17px] border-l border-[#ddd]" />
                <Caret />
            </div>
        </div>
    );
}

const CURVE_TOOLS = [
    "people", "blueBlock", "teapot", "greyCylinder", "line", "arc", "circle", "tangent", "segment",
    "plus", "curveS", "fillet", "bridge", "arrows", "offsetCurve", "profile", "ring", "sheetLift",
    "sheetTilt", "sheetGrey", "sheetPink", "sheetTeal", "knob", "plus", "cross",
];

function LeftToolbar() {
    return (
        <aside className="flex w-7 shrink-0 flex-col bg-white">
            <div className="flex flex-1 flex-col items-center justify-between pt-[6px] pb-[3px]">
                {CURVE_TOOLS.map((name, i) => (
                    <IconButton key={i} name={name} size="size-[14px]" />
                ))}
            </div>
            <div className="mx-[2px] grid grid-cols-2 justify-items-center gap-y-[4px] border-b border-[#ddd] pb-[2px]">
                {["sheetTeal", "meshBlue", "sweep", "wrench"].map((name) => (
                    <IconButton key={name} name={name} size="size-[10px]" />
                ))}
            </div>
            <div className="flex h-[10px] items-center pl-1">
                <Caret />
            </div>
        </aside>
    );
}

function Scene() {
    return (
        <svg viewBox="30 123 522 485" preserveAspectRatio="xMidYMid slice" className="absolute inset-0 size-full">
            <defs>
                <linearGradient id="sky" x1="0" y1="0" x2="0" y2="1">
                    <stop offset="0" stopColor="#020202" />
                    <stop offset="0.3" stopColor="#2b2b2b" />
                    <stop offset="0.5" stopColor="#454545" />
                    <stop offset="0.8" stopColor="#6c6c6c" />
                    <stop offset="1" stopColor="#838383" />
                </linearGradient>
                <linearGradient id="wall" x1="0" y1="0" x2="0" y2="1">
                    <stop offset="0" stopColor="#4c4e50" />
                    <stop offset="0.35" stopColor="#626466" />
                    <stop offset="0.75" stopColor="#797a7c" />
                    <stop offset="1" stopColor="#7f7f7f" />
                </linearGradient>
                <linearGradient id="floor" x1="0" y1="0" x2="0.2" y2="1">
                    <stop offset="0" stopColor="#4b4d4f" />
                    <stop offset="1" stopColor="#636669" />
                </linearGradient>
                <linearGradient id="side" x1="0" y1="0" x2="0" y2="1">
                    <stop offset="0" stopColor="#57595b" />
                    <stop offset="0.6" stopColor="#84878a" />
                    <stop offset="1" stopColor="#797b7d" />
                </linearGradient>
                <linearGradient id="pocket" x1="0" y1="0" x2="1" y2="0.4">
                    <stop offset="0" stopColor="#6e7073" />
                    <stop offset="0.7" stopColor="#7b7d80" />
                    <stop offset="1" stopColor="#8f9195" />
                </linearGradient>
            </defs>
            <rect x="30" y="123" width="522" height="485" fill="url(#sky)" />
            <path fill="url(#wall)" d="M30 352 88 283 98 268 113 266 487 366 552 374V608H30Z" />
            <path fill="url(#side)" d="M487 366 552 374V496L480 486 470 430Z" />

            {/* inner floor */}
            <path fill="url(#floor)" d="M100 290C101 281 108 274 120 276L487 375 510 377Q526 380 526 392L518 468Q516 480 505 480L480 478 293 480 110 475C97 474 90 465 90 450Z" />
            <path fill="url(#pocket)" d="M470 422 500 425Q518 428 518 441L517 468Q514 480 502 479L462 476Z" />

            {/* lower blocks */}
            <path fill="#76777a" d="M82 540 447 537 480 487 462 573Q280 588 30 579V540Z" />
            <path fill="#70726f" d="M480 487 549 495 531 582 462 573Z" />

            {/* cut wall under the selected face */}
            <path fill="#5a646b" d="M106 430 470 430 447 537Q290 548 105 540L82 538 90 470Z" />
            <g fill="none" stroke="#3f484d" strokeWidth="0.9">
                <path d="M145 436 124 538M242 438 222 541M326 438 305 541M387 436 367 539M432 434 411 538M469 431 447 537" />
                <path d="M103 432 84 525M107 433 89 525M112 434 93 515" />
            </g>
            <path fill="none" stroke="#7e8a90" strokeWidth="0.7" d="M110 532Q290 537 455 532L480 528 541 538" />

            {/* rim */}
            <path
                fill="#a4abb0"
                fillOpacity="0.32"
                fillRule="evenodd"
                d="M113 266C98 264 89 272 88 285L74 450C73 468 85 483 105 484L293 489 480 487V478L293 480 110 475C97 474 90 465 90 450L100 290C101 281 108 274 120 276L487 375V366L122 267Z"
            />
            <g fill="none" stroke="#85898c" strokeWidth="0.7">
                <path d="M487 366 122 267C102 262 90 268 88 285L74 450C73 468 85 483 105 484L293 489 480 487 552 496" />
                <path d="M487 375 120 276C108 274 101 281 100 290L90 450C90 465 97 474 110 475L293 480 480 478" />
                <path d="M487 366 552 374M487 366V375L473 455M510 377 494 475" />
                <path d="M487 375 510 377Q526 380 526 392L518 468Q516 480 505 480" />
                <path d="M470 421 500 424Q518 428 518 441T500 456L472 452" />
                <path d="M88 283 30 352M75 317 65 350 62 500M74 457 30 500M110 483 62 530" />
                <path d="M30 515Q45 540 80 541M30 503Q40 535 75 538M30 579Q280 590 452 573L462 573 531 582 549 495" strokeWidth="0.6" />
                <path d="M474 487 452 573M481 487 464 573M126 276 98 307M100 289 112 292M98 315 118 320M95 347 108 349" />
            </g>
            <path fill="#8c979d" fillOpacity="0.6" d="M92 368Q92 361 103 360V363Q96 363 94 369Z" />

            <path
                fill="#ffbf5b"
                stroke="#d9a04c"
                strokeWidth="0.6"
                d="M120 321 466 419Q471 421 470 426 469 431 463 432 290 441 109 433 103 432 103 425L111 328Q112 321 120 321Z"
            />
            <path fill="none" stroke="#d98e42" strokeWidth="1.3" d="M105 539Q290 548 447 537" />
            <path fill="none" stroke="#c69358" d="M89 432 82 530" />

            {/* world csys */}
            <g strokeWidth="0.7">
                <path fill="#8a8a89" stroke="#b8b8b8" d="M82 527 106 530 102 563 78 560Z" />
                <path stroke="#b8b8b8" d="M80 545 104 548" />
                <path stroke="#c42730" strokeWidth="1.6" d="M80 544 62 542" />
                <path fill="#c42730" d="M51 541 66 538 65 544Z" />
                <path fill="#23a23b" d="M93 512 91 527H96Z" />
                <path fill="#1b1f8c" d="M85 563H89L88 572H85Z" />
                <path stroke="#3034b8" strokeWidth="1.2" fill="none" d="M83 573H87L83 577H87" />
                <path stroke="#c42730" d="M44 538 48 542M48 538 44 542" />
            </g>
            {/* offset handle */}
            <g fill="none">
                <path stroke="#748761" d="M219 506 267 504" />
                <path fill="#dfe9e3" d="M228 475 230 486 228 499 226 486Z" />
                <path stroke="#d9b6bd" strokeWidth="2" d="M198 496 213 498" />
                <path stroke="#ad3e4a" d="M195 490 200 493M200 490 195 493" />
                <path stroke="#2f7a3c" d="M219 470 222 473 225 470" />
                <path stroke="#3240b5" d="M225 523H229L225 528H229M233 524H230V528H233" />
                <circle cx="223" cy="516" r="1" fill="#b8c9ea" />
                <circle cx="267" cy="504" r="3" fill="#18a0d6" />
            </g>
        </svg>
    );
}

function Viewport() {
    return (
        <main className="flex min-w-0 flex-1 flex-col">
            <div className="flex h-[15px] items-end border-b border-[#0a6a8c] bg-white pl-px">
                <div className="flex h-[14px] items-center gap-[3px] bg-[#036a8d] px-[3px] text-[7px] text-white">
                    <Icon name="part" className="size-[9px]" />
                    66-1.prt
                    <Icon name="lock" className="size-[7px]" />
                    <button type="button" aria-label="关闭标签">
                        <Icon name="close" className="size-[6px]" />
                    </button>
                </div>
            </div>
            <div className="relative flex-1 overflow-hidden bg-[#444]">
                <Scene />
                <div className="absolute top-[4px] left-[196px] flex h-[19px] w-[131px] items-center bg-white px-[6px]">
                    <Select label="面规则" value="相切面" className="h-[12px] w-[91px] text-[#333]" />
                    <button type="button" aria-label="更多选项" className="ml-[6px] text-[#555]">
                        <svg viewBox="0 0 11 2" className="h-[2px] w-[11px]" aria-hidden="true">
                            <path fill="currentColor" d="M1 0H2V1H1ZM5 0H6V1H5ZM9 0H10V1H9Z" />
                        </svg>
                    </button>
                    <span className="ml-auto flex h-4 items-end border-l border-dotted border-[#ccc] pb-[3px] pl-[3px]">
                        <Caret />
                    </span>
                </div>
                <div className="absolute top-[375px] left-[126px] flex h-[17px] w-[64px] items-center border border-[#dfe7f0] bg-[#f3f6fb] pr-px">
                    <span className="mr-[5px] h-[11px] w-[5px] border-x border-dotted border-[#b9c4d4]" />
                    <label htmlFor="handle-distance" className="text-[7px] whitespace-nowrap text-[#222]">
                        距离
                    </label>
                    <span className="relative ml-px flex h-[13px] min-w-0 flex-1 items-center border border-[#8c8c8c] bg-white">
                        <input id="handle-distance" defaultValue="0" className="w-full px-[2px] text-[7px]" />
                        <Caret className="absolute right-[3px] text-black" />
                    </span>
                </div>
            </div>
        </main>
    );
}

function ViewToolbar() {
    return (
        <aside className="flex w-[22px] shrink-0 flex-col border-r border-[#c9c9c9] bg-white pt-[243px]">
            <div className="mx-px flex flex-col items-center gap-[4px] border-b border-[#ddd] pb-[4px]">
                {["orangeWarn", "orangeCylinder", "save", "eyeFrame", "eyeToggle", "swap"].map((name) => (
                    <IconButton key={name} name={name} size="size-[14px]" />
                ))}
            </div>
            <div className="mt-auto flex h-[10px] items-center pl-1">
                <Caret />
            </div>
        </aside>
    );
}

const HISTORY: Record<number, { name?: string; style?: string; current?: boolean; done?: boolean }> = {
    3: { name: "用户实体", style: "pl-[51px]" },
    4: { name: "模型记录", style: "pl-[44px]", done: true },
    5: { name: "坐标系 (0)", style: "pl-[55px] text-[#a3a3a3]", done: true },
    6: { done: true },
    7: { done: true },
    8: { done: true },
    9: { name: "拉伸 (9)", style: "pl-[49px]", done: true },
    10: { name: "面倒圆 (10)", style: "pl-[43px] font-bold", current: true, done: true },
};

function PartNavigator() {
    return (
        <section className="mx-[4px] flex min-w-0 flex-1 flex-col bg-white pb-[2px] text-[#333]">
            <div className="mt-[15px] flex-1 border border-[#e4e4e4]">
                <table className="h-full w-full table-fixed border-collapse text-left text-[7px] leading-[10px]">
                    <colgroup>
                        <col />
                        <col className="w-[14px]" />
                        <col className="w-[14px]" />
                        <col className="w-[55px]" />
                    </colgroup>
                    <thead>
                        <tr className="h-[14px] bg-[#ececec]">
                            <th aria-label="名称" />
                            <th className="border-l border-[#d8d8d8] p-0 text-center font-normal">当</th>
                            <th className="border-l border-[#d8d8d8] p-0 text-center font-normal">最</th>
                            <th className="border-l border-[#d8d8d8] py-0 pl-[3px] font-normal">附注</th>
                        </tr>
                    </thead>
                    <tbody>
                        {Array.from({ length: 35 }, (_, i) => {
                            const row = HISTORY[i];
                            return (
                                <tr key={i} className={clsx("h-[11px]", i % 2 ? "bg-[#f7f7f7]" : "bg-white")}>
                                    <td className={clsx("py-0 whitespace-nowrap", row?.style)}>{row?.name}</td>
                                    <td className="border-l border-[#ececec] p-0">
                                        {row?.current && <Icon name="chip" className="mx-auto size-[8px]" />}
                                    </td>
                                    <td className="border-l border-[#ececec] p-0">
                                        {row?.done && <Icon name="check" className="mx-auto size-[9px]" />}
                                    </td>
                                    <td className="border-l border-[#ececec] p-0" />
                                </tr>
                            );
                        })}
                    </tbody>
                </table>
            </div>
            <div className="flex h-[10px] items-center bg-[#f2f2f2] px-3">
                <div className="h-[2px] flex-1 bg-[#8e8e8e]" />
            </div>
            <div className="h-[3px] bg-[#c6c6c6]" />
            {["搜索", "相关性", "细节", "预览"].map((label) => (
                <button key={label} type="button" className="flex h-[14px] items-center gap-[6px] border-b border-[#c4c4c4] pl-[5px] text-[8px] leading-3 text-[#1b6482]">
                    <Caret className="-rotate-90 text-[#1b4a5e]" />
                    {label}
                </button>
            ))}
        </section>
    );
}

const RESOURCES = [
    ["gearDark", "h-[20px]", "size-[10px]"],
    ["nest", "h-[28px]", "size-[14px]"],
    ["nestOrange", "h-[25px]", "size-[15px]"],
    ["part", "h-[24px] bg-white", "size-[15px]"],
    ["partClock", "h-[25px]", "size-[15px]"],
    ["hands", "h-[24px]", "size-[15px]"],
    ["sphere", "h-[34px]", "size-[14px]"],
    ["web", "h-[28px]", "size-[14px]"],
    ["clock", "h-[31px]", "size-[15px]"],
    ["palette", "h-[20px]", "size-[15px]"],
    ["brush", "h-[27px]", "size-[15px]"],
    ["tools", "h-[23px]", "size-[15px]"],
];

function ResourceBar() {
    return (
        <aside className="flex w-[17px] shrink-0 flex-col bg-[#dbdbdb]">
            {RESOURCES.map(([name, height, size]) => (
                <IconButton key={name} name={name} size={size} className={height} />
            ))}
        </aside>
    );
}

const BOTTOM_TOOLS = [
    "ruler", "boardEdit", "boardGear", "orangeHead", "info", "csysCube", "csysMove", "csys", "csysRed",
    "csysSave", "csysPost", "layerPage", "layerEdit", "layerGear", "drum", "boxCut", "orangeSquare",
    "orangeTopPage", "orangeStack", "tray", "orangeArc", "orangeBlue", "fin", "squareMove", "csysBlue",
    "chainBrown", "orangeTopPage", "book", "fan", "mirror", "linkBlue",
];
const FEATURE_TOOLS = [
    "faceGrid", "orangeWarn", "hat", "sheetOrange", "orangeArc", "sheetBlue", "greyCube", "orangeCube",
    "orangeTop", "paleCube", "purple", "square", "monitor",
    "faceMove", "tealHat", "sheetBlue", "orangeArc", "sheetGrey", "meshBlue", "dots", "paleCube",
    "redBall", "flame", "magenta", "tag",
];

function BottomToolbar() {
    return (
        <div className="flex h-7 items-center border-b border-[#d6d6d6] bg-white pr-[3px] pl-1">
            <div className="flex max-w-[580px] flex-1 items-center justify-between">
                {BOTTOM_TOOLS.map((name, i) => (
                    <IconButton key={i} name={name} size="size-[15px]" />
                ))}
            </div>
            <div className="ml-[3px] grid grid-cols-[repeat(13,14px)] gap-y-[3px] border-r border-[#ddd]">
                {FEATURE_TOOLS.map((name, i) => (
                    <IconButton key={i} name={name} size="size-[10px]" />
                ))}
            </div>
            <span className="ml-auto self-end pb-[5px]">
                <Caret />
            </span>
        </div>
    );
}

function SectionTitle({ children }: { children: ReactNode }) {
    return (
        <button type="button" className="flex h-4 items-center gap-[4px] text-[8px] leading-3 text-[#23799b]">
            <svg viewBox="0 0 6 4" className="h-1 w-[5px]" aria-hidden="true">
                <path fill="#17607d" d="M0 0H6L3 4Z" />
            </svg>
            {children}
        </button>
    );
}

function OffsetRegionDialog() {
    return (
        <div role="dialog" aria-label="偏置区域" className="absolute top-[21px] left-[460px] w-[186px] bg-[#efefef] text-[7px] leading-[10px] text-[#333]">
            <div className="flex h-4 items-center gap-[4px] bg-[#025a88] px-[3px] text-white">
                <Icon name="gearLight" className="size-[9px]" />
                <h2 className="flex-1 text-[8px]">偏置区域</h2>
                <IconButton name="reset" size="size-[8px]" />
                <IconButton name="question" size="size-[9px]" />
                <IconButton name="close" size="size-[9px]" />
            </div>
            <section className="mx-[3px] bg-white px-[5px] pt-px">
                <SectionTitle>面</SectionTitle>
                <div className="mt-[2px] flex h-[18px] items-center bg-[#ffdf73]">
                    <Icon name="check" className="size-[9px]" />
                    <span className="flex-1 pl-[3px]">选择面 (2)</span>
                    <IconButton name="orangeTop" size="size-[15px]" className="h-full w-[19px] border-l border-[#fff1b8]" />
                </div>
                <div className="bg-[#efefef] px-[6px] pb-[5px]">
                    <button type="button" className="flex h-[18px] items-center gap-[4px] text-[#23799b]">
                        <svg viewBox="0 0 6 4" className="h-[3px] w-[4px]" aria-hidden="true">
                            <path fill="#17607d" d="M0 0H6L3 4Z" />
                        </svg>
                        面查找器
                    </button>
                    <div role="tablist" className="flex h-[17px]">
                        <button role="tab" aria-selected="true" type="button" className="w-[30px] bg-white text-[#23799b]">
                            结果
                        </button>
                        <button role="tab" aria-selected="false" type="button" className="w-[30px] border border-b-0 border-[#dcdcdc]">
                            设置
                        </button>
                        <button role="tab" aria-selected="false" type="button" className="w-[29px] border border-b-0 border-l-0 border-[#dcdcdc]">
                            参考
                        </button>
                    </div>
                    <div className="border border-t-0 border-[#e2e2e2] bg-white px-[3px] pt-[4px] pb-[3px]">
                        <div className="h-[12px]">已找到</div>
                        <ul className="border border-[#e2e2e2] pb-[3px]">
                            {Array.from({ length: 6 }, (_, i) => (
                                <li key={i} className={clsx("h-[13px]", i % 2 ? "bg-[#f6f6f6]" : "bg-white")} />
                            ))}
                        </ul>
                    </div>
                </div>
            </section>
            <section className="mx-[3px] mt-[4px] border-t border-[#dcdcdc] bg-white px-[5px] pb-[6px]">
                <SectionTitle>偏置</SectionTitle>
                <div className="mt-[2px] flex h-[14px] items-center">
                    <label htmlFor="offset-distance" className="flex-1">
                        距离
                    </label>
                    <IconButton name="flip" size="size-[10px]" className="h-[14px] w-[13px] border border-[#a0a0a0]" />
                    <div className="relative ml-px flex h-[14px] w-[81px] items-center border border-[#a0a0a0] pl-[3px]">
                        <input id="offset-distance" defaultValue="0" className="block h-[10px] w-[5px] bg-[#2470c8] text-[7px] text-white" />
                        <svg viewBox="0 0 6 12" className="absolute top-[6px] left-[20px] z-10 h-[12px] w-[6px]" aria-hidden="true">
                            <path fill="none" stroke="#555" d="M1 1H5M3 1V11M1 11H5" />
                        </svg>
                        <span className="ml-auto pr-[19px]">mm</span>
                        <Caret className="absolute right-[3px] text-black" />
                    </div>
                </div>
            </section>
            <section className="mx-[3px] border-t border-[#dcdcdc] bg-white px-[5px] pb-[5px]">
                <SectionTitle>设置</SectionTitle>
                <div className="mt-[2px] flex h-[14px] items-center">
                    <span className="flex-1">溢出行为</span>
                    <Select label="溢出行为" value="自动" className="h-[14px] w-[81px]" />
                </div>
            </section>
            <div className="mx-[3px] flex h-[20px] items-center border-t border-[#dcdcdc] px-[2px]">
                <label className="flex flex-1 items-center gap-[3px] pl-px">
                    <span className="relative flex size-[8px] items-center justify-center">
                        <input type="checkbox" defaultChecked className="absolute inset-0 size-full appearance-none rounded-[2px] bg-[#0b5bab]" />
                        <svg viewBox="0 0 8 8" className="relative size-[6px]" aria-hidden="true">
                            <path fill="none" stroke="#fff" d="M1 4 3 6 7 2" />
                        </svg>
                    </span>
                    预览
                </label>
                <span>显示结果</span>
                <IconButton name="magnifier" size="size-[10px]" className="ml-px size-[14px] border border-[#a0a0a0]" />
            </div>
            <div className="mx-[3px] flex h-[6px] items-center justify-center border-b border-[#dcdcdc]">
                <svg viewBox="0 0 6 4" className="h-[3px] w-[6px]" aria-hidden="true">
                    <path d="M0 4H6L3 0Z" />
                </svg>
            </div>
            <div className="flex h-[25px] items-center justify-end gap-[3px] pr-[8px]">
                <button type="button" className="h-[14px] w-[31px] bg-[#036287] whitespace-nowrap text-white">
                    &lt; 确定 &gt;
                </button>
                <button type="button" className="h-[14px] w-[31px] border border-[#5f93a8] bg-[#f8f8f8] text-[#23799b]">
                    应用
                </button>
                <button type="button" className="h-[14px] w-[31px] border border-[#5f93a8] bg-[#f8f8f8] text-[#23799b]">
                    取消
                </button>
            </div>
        </div>
    );
}

export default function App() {
    return (
        <div lang="zh-CN" className="relative flex h-screen flex-col overflow-hidden bg-[#04739d] font-['Noto_Sans','Noto_Sans_CJK_SC',sans-serif]">
            <TitleBar />
            <div className="mr-[3px] ml-[2px] flex min-h-0 flex-1 flex-col bg-white">
                <Ribbon />
                <SelectionBar />
                <div className="flex min-h-0 flex-1">
                    <LeftToolbar />
                    <Viewport />
                    <ViewToolbar />
                    <div className="flex w-[28%] shrink-0">
                        <PartNavigator />
                        <ResourceBar />
                    </div>
                </div>
                <BottomToolbar />
                <footer className="h-[13px] pl-px text-[6px] leading-[10px] text-[#222]">选择要偏置的面</footer>
            </div>
            <div className="h-[4px] bg-[#05638a]" />
            <OffsetRegionDialog />
        </div>
    );
}
